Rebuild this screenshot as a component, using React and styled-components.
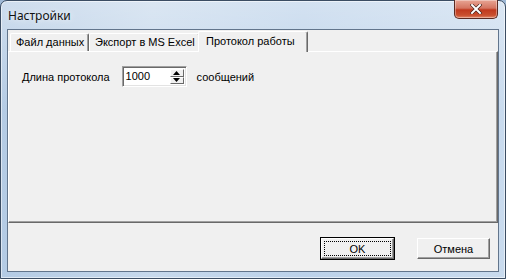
import React from "react";
import styled, { createGlobalStyle } from "styled-components";

const Global = createGlobalStyle`
  html, body { margin: 0; padding: 0; }
  body { width: 506px; height: 279px; overflow: hidden; background: #9fb9d6; }
`;

const Window = styled.div`
  width: 506px;
  height: 279px;
  box-sizing: border-box;
  border: 1px solid #3b4d63;
  border-radius: 7px 7px 0 0;
  background:
    linear-gradient(180deg, rgba(255,255,255,0.35) 0%, rgba(255,255,255,0) 40%),
    linear-gradient(90deg, #b4cbe4 0%, #c7d9ec 30%, #bcd2ea 60%, #c9dbee 100%);
  box-shadow: inset 0 0 0 1px rgba(255,255,255,0.55);
  display: flex;
  flex-direction: column;
  font-family: "Liberation Sans", Arial, sans-serif;
  font-size: 11px;
  color: #000;
`;

const TitleBar = styled.div`
  height: 28px;
  display: flex;
  align-items: flex-start;
  justify-content: space-between;
  padding: 0 7px 0 7px;
`;

const Title = styled.div`
  font-family: "Noto Sans", "Liberation Sans", sans-serif;
  font-size: 12px;
  line-height: 12px;
  margin-top: 9px;
  color: #111;
  text-shadow: 0 0 6px rgba(255,255,255,0.9);
`;

const CloseBtn = styled.div`
  width: 44px;
  height: 19px;
  margin-top: -1px;
  box-sizing: border-box;
  border: 1px solid #5a2a22;
  border-top: none;
  border-radius: 0 0 5px 5px;
  background: linear-gradient(180deg, #e8a594 0%, #d47561 45%, #c0391e 55%, #c9502f 85%, #e3886a 100%);
  box-shadow: inset 0 0 0 1px rgba(255,255,255,0.35);
  display: flex;
  align-items: center;
  justify-content: center;
`;

const Client = styled.div`
  flex: 1;
  margin: 0 6px 6px 6px;
  border: 1px solid #62758c;
  background: #f0f0f0;
  display: flex;
  flex-direction: column;
`;

const TabStrip = styled.div`
  display: flex;
  align-items: flex-end;
  padding: 1px 0 0 2px;
  height: 21px;
  box-sizing: border-box;
`;

const Tab = styled.div`
  box-sizing: border-box;
  width: ${(p) => p.$w}px;
  height: ${(p) => (p.$active ? 21 : 18)}px;
  margin: ${(p) => (p.$active ? "0 -2px -1px -2px" : "0")};
  position: relative;
  z-index: ${(p) => (p.$active ? 2 : 1)};
  background: #f0f0f0;
  border-top: 1px solid #fff;
  border-left: 1px solid #fff;
  border-right: 1px solid #696969;
  box-shadow: inset -1px 0 0 #a0a0a0;
  border-radius: 2px 2px 0 0;
  padding-left: ${(p) => p.$pl}px;
  padding-top: ${(p) => (p.$active ? 3 : 2)}px;
  white-space: nowrap;
`;

const Panel = styled.div`
  height: 172px;
  box-sizing: border-box;
  border-top: 1px solid #fff;
  border-left: 1px solid #fff;
  border-right: 1px solid #696969;
  border-bottom: 1px solid #696969;
  box-shadow: inset -1px -1px 0 #a0a0a0;
  padding: 14px 0 0 13px;
`;

const Row = styled.div`
  display: flex;
  align-items: center;
`;

const Label = styled.span`
  margin-right: ${(p) => p.$mr}px;
`;

const Spin = styled.div`
  width: 65px;
  height: 21px;
  box-sizing: border-box;
  border-top: 1px solid #a0a0a0;
  border-left: 1px solid #a0a0a0;
  border-right: 1px solid #fff;
  border-bottom: 1px solid #fff;
  box-shadow: inset 1px 1px 0 #696969, inset -1px -1px 0 #e3e3e3;
  background: #fff;
  display: flex;
  align-items: stretch;
  padding: 2px 2px 2px 2px;
  margin-right: 10px;
`;

const SpinValue = styled.div`
  flex: 1;
  padding-left: 1px;
  line-height: 15px;
`;

const SpinBtns = styled.div`
  width: 14px;
  display: flex;
  flex-direction: column;
`;

const SpinBtn = styled.div`
  flex: 1;
  box-sizing: border-box;
  background: #f0f0f0;
  border-top: 1px solid #fff;
  border-left: 1px solid #fff;
  border-right: 1px solid #696969;
  border-bottom: 1px solid #696969;
  display: flex;
  align-items: center;
  justify-content: center;
`;

const Footer = styled.div`
  flex: 1;
  display: flex;
  justify-content: flex-end;
  align-items: flex-start;
  padding: 14px 7px 0 0;
  gap: 21px;
`;

const Button = styled.div`
  width: ${(p) => (p.$default ? 75 : 75)}px;
  height: 23px;
  box-sizing: border-box;
  background: #f0f0f0;
  border: 1px solid ${(p) => (p.$default ? "#000" : "#f0f0f0")};
  display: flex;
  align-items: center;
  justify-content: center;
  position: relative;
`;

const ButtonInner = styled.div`
  position: absolute;
  inset: 0;
  border-top: 1px solid #fff;
  border-left: 1px solid #fff;
  border-right: 1px solid #696969;
  border-bottom: 1px solid #696969;
  box-shadow: inset -1px -1px 0 #a0a0a0;
`;

const Focus = styled.div`
  position: absolute;
  inset: 3px;
  border: 1px dotted #000;
`;

const ButtonText = styled.span`
  position: relative;
`;

export default function App() {
  return (
    <>
      <Global />
      <Window>
        <TitleBar>
          <Title>Настройки</Title>
          <CloseBtn>
            <svg width="12" height="10" viewBox="0 0 12 10">
              <path d="M2 1 L10 9 M10 1 L2 9" stroke="#3a1a14" strokeWidth="3.2" strokeLinecap="square" />
              <path d="M2 1 L10 9 M10 1 L2 9" stroke="#fff" strokeWidth="2" strokeLinecap="square" />
            </svg>
          </CloseBtn>
        </TitleBar>
        <Client>
          <TabStrip>
            <Tab $w={79} $pl={5}>Файл данных</Tab>
            <Tab $w={111} $pl={5}>Экспорт в MS Excel</Tab>
            <Tab $w={110} $pl={7} $active>Протокол работы</Tab>
          </TabStrip>
          <Panel>
            <Row>
              <Label $mr={12}>Длина протокола</Label>
              <Spin>
                <SpinValue>1000</SpinValue>
                <SpinBtns>
                  <SpinBtn>
                    <svg width="7" height="4" viewBox="0 0 7 4"><path d="M3.5 0 L7 4 L0 4 Z" fill="#000" /></svg>
                  </SpinBtn>
                  <SpinBtn>
                    <svg width="7" height="4" viewBox="0 0 7 4"><path d="M0 0 L7 0 L3.5 4 Z" fill="#000" /></svg>
                  </SpinBtn>
                </SpinBtns>
              </Spin>
              <Label $mr={0}>сообщений</Label>
            </Row>
          </Panel>
          <Footer>
            <Button $default>
              <ButtonInner />
              <Focus />
              <ButtonText>OK</ButtonText>
            </Button>
            <Button>
              <ButtonInner />
              <ButtonText>Отмена</ButtonText>
            </Button>
          </Footer>
        </Client>
      </Window>
    </>
  );
}
